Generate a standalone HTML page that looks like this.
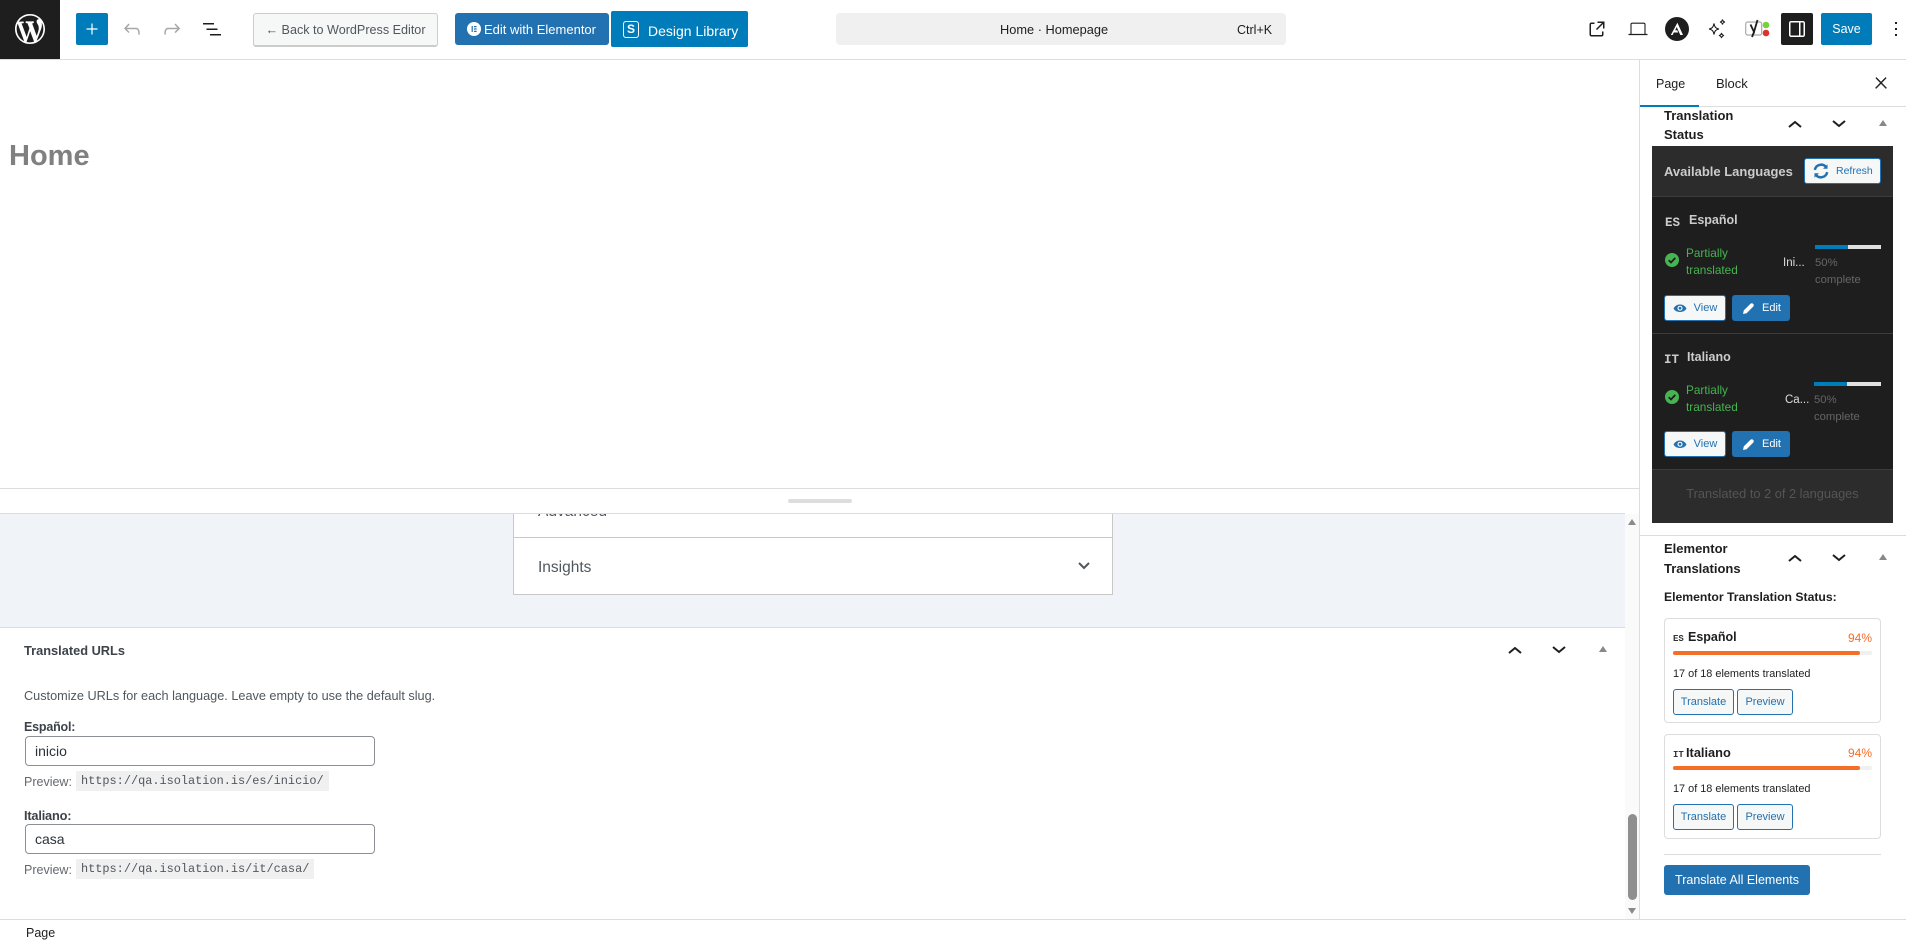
<!DOCTYPE html>
<html><head><meta charset="utf-8"><style>
*{box-sizing:border-box}
html,body{margin:0;padding:0;width:1906px;height:941px;overflow:hidden;background:#fff;font-family:"Liberation Sans",sans-serif;color:#1e1e1e}
.a{position:absolute}
.t{position:absolute;white-space:nowrap;height:20px;line-height:20px;margin-top:1px}
.b{position:absolute;border-radius:3px;font-size:11px;text-align:center;white-space:nowrap;padding-top:1px}
.wb{background:#f6f7f7;border:1px solid #2271b1;color:#2271b1}
.bb{background:#2271b1;color:#fff}
svg{position:absolute;display:block}
</style></head><body>
<!-- header -->
<div class="a" style="left:0;top:59px;width:1906px;height:1px;background:#ddd"></div>
<div class="a" style="left:0;top:0;width:60px;height:59px;background:#1e1e1e"></div>
<svg style="left:15px;top:14px" width="30" height="30" viewBox="0 0 20 20" fill="#fff"><path d="M20 10c0-5.51-4.49-10-10-10C4.48 0 0 4.49 0 10c0 5.52 4.48 10 10 10 5.51 0 10-4.48 10-10zM7.78 15.37L4.37 6.22c.55-.02 1.17-.08 1.17-.08.5-.06.44-1.13-.06-1.11 0 0-1.45.11-2.37.11-.18 0-.37 0-.58-.01C4.12 2.69 6.87 1.11 10 1.11c2.33 0 4.45.87 6.05 2.34-.68-.11-1.65.39-1.65 1.58 0 .74.45 1.36.9 2.1.35.61.55 1.36.55 2.46 0 1.49-1.4 5-1.4 5l-3.03-8.37c.54-.02.82-.17.82-.17.5-.05.44-1.25-.06-1.22 0 0-1.44.12-2.38.12-.87 0-2.33-.12-2.33-.12-.5-.03-.56 1.2-.06 1.22l.92.08 1.26 3.41zM17.41 10c.24-.64.74-1.87.43-4.25.7 1.29 1.05 2.71 1.05 4.25 0 3.29-1.73 6.24-4.4 7.78.97-2.59 1.94-5.2 2.92-7.78zM6.1 18.09C3.12 16.65 1.11 13.53 1.11 10c0-1.3.23-2.48.72-3.59C3.25 10.3 4.67 14.2 6.1 18.09zm4.03-6.63l2.58 6.98c-.86.29-1.76.45-2.71.45-.79 0-1.57-.11-2.29-.33.81-2.38 1.62-4.74 2.42-7.1z"/></svg>
<div class="a" style="left:76px;top:13px;width:32px;height:32px;background:#007cba;border-radius:2px"></div>
<svg style="left:80px;top:17px" width="24" height="24" viewBox="0 0 24 24" fill="#fff"><path d="M11.4 6.500h1.200v4.900h4.900v1.200h-4.900v4.900h-1.200v-4.900H6.500v-1.200h4.900z"/></svg>
<svg style="left:120px;top:17px" width="24" height="24" viewBox="0 0 24 24" fill="#a7a7a7"><path d="M18.3 11.700c-.6-.6-1.400-.9-2.300-.9H6.700l2.900-3.300-1.100-1-4.500 5L8.500 16l1-1-2.700-2.700H16c.5 0 .9.200 1.300.5 1 1 1 3.400 1 4.500v.3h1.500v-.2c0-1.500 0-4.300-1.500-5.700z"/></svg>
<svg style="left:160px;top:17px" width="24" height="24" viewBox="0 0 24 24" fill="#a7a7a7"><path d="M15.600 6.500l-1.100 1 2.900 3.300H8c-.9 0-1.700.3-2.300.9-1.400 1.500-1.400 4.200-1.400 5.600v.2h1.500v-.3c0-1.100 0-3.500 1-4.500.3-.3.7-.5 1.300-.5h9.200L14.500 15l1.100 1.100 4.600-4.600-4.600-5z"/></svg>
<svg style="left:200px;top:17px" width="24" height="24" viewBox="0 0 24 24" fill="#1e1e1e"><path d="M3 6h11v1.500H3V6Zm3.500 5.500h11V13h-11v-1.500ZM21 17H10v1.500h11V17Z"/></svg>

<div class="a" style="left:253px;top:13px;width:185px;height:34px;background:#f6f7f7;border:1px solid #ccc;border-bottom-width:2px;border-radius:3px;color:#50575e;font-size:12.6px;line-height:32px;text-align:center;white-space:nowrap">← Back to WordPress Editor</div>
<div class="a" style="left:455px;top:13px;width:154px;height:32px;background:#2271b1;border-radius:3px"></div>
<div class="a" style="left:467px;top:22px;width:14px;height:14px;border-radius:50%;background:#fff"></div>
<svg style="left:467px;top:22px" width="14" height="14" viewBox="0 0 14 14" fill="#2271b1"><path d="M4.600 4h1.200v6H4.600zM7 4h2.600v1.200H7zM7 6.400h2.600v1.200H7zM7 8.800h2.600V10H7z"/></svg>
<div class="t" style="left:484px;top:19px;font-size:13px;color:#fff">Edit with Elementor</div>
<div class="a" style="left:611px;top:11px;width:137px;height:36px;background:#007cba;border-radius:2px"></div>
<div class="a" style="left:623px;top:21px;width:16px;height:17px;border:1.3px solid #fff;border-radius:3px;color:#fff;font-size:12px;font-weight:700;text-align:center;line-height:14px">S</div>
<div class="t" style="left:648px;top:20px;font-size:14px;color:#fff">Design Library</div>

<div class="a" style="left:836px;top:13px;width:450px;height:32px;background:#f0f0f0;border-radius:4px"></div>
<div class="t" style="left:1000px;top:19px;font-size:12.8px;color:#1e1e1e">Home · Homepage</div>
<div class="t" style="left:1237px;top:19px;font-size:12.5px;color:#1e1e1e">Ctrl+K</div>

<svg style="left:1585px;top:17px" width="24" height="24" viewBox="0 0 24 24" fill="#1e1e1e"><path d="M19.500 4.500h-7V6h4.440l-5.970 5.970 1.060 1.060L18 7.060v4.440h1.500v-7Zm-13 1a2 2 0 0 0-2 2v10a2 2 0 0 0 2 2h10a2 2 0 0 0 2-2v-3H17v3a.5.5 0 0 1-.5.5h-10a.5.5 0 0 1-.5-.5v-10a.5.5 0 0 1 .5-.5h3V5.500h-3Z"/></svg>
<svg style="left:1626px;top:17px" width="24" height="24" viewBox="0 0 24 24" fill="none" stroke="#1e1e1e" stroke-width="1.1"><path d="M5 17V7.500C5 6.700 5.700 6.200 6.400 6.200h11.200c.7 0 1.400.5 1.400 1.300V17"/><path d="M2.500 17.500h19" stroke-width="1.300"/></svg>
<svg style="left:1665px;top:17px" width="24" height="24" viewBox="0 0 24 24"><circle cx="12" cy="12" r="12" fill="#1e1e1e"/><path d="M12.400 5.800L18 18h-2.700l-3.600-8-1.500 3.300h2l1 2.200H8.800L7.600 18H5.800z" fill="#fff"/></svg>
<svg style="left:1706px;top:18px" width="22" height="22" viewBox="0 0 22 22" fill="none" stroke="#1e1e1e" stroke-width="1.100"><path d="M8 5.500C8.600 9 9.700 10.400 13 11c-3.300.6-4.400 2-5 5.500C7.400 13 6.300 11.600 3 11c3.300-.6 4.400-2 5-5.500z"/><path d="M16.500 1.500c.3 1.700.9 2.300 2.500 2.500-1.600.3-2.200.9-2.500 2.500-.3-1.600-.9-2.200-2.500-2.500 1.600-.2 2.200-.8 2.500-2.500z"/><path d="M15.500 15c.3 1.700.9 2.300 2.500 2.500-1.600.3-2.200.9-2.500 2.500-.3-1.600-.9-2.200-2.500-2.500 1.600-.2 2.200-.8 2.500-2.500z"/></svg>
<svg style="left:1745px;top:19px" width="26" height="20" viewBox="0 0 26 20"><rect x=".7" y="3" width="16" height="13" rx="2" fill="none" stroke="#aaa" stroke-width="1.200"/><path d="M5.500 5.500l3.500 7.500 3.500-12" fill="none" stroke="#1e1e1e" stroke-width="1.800"/><path d="M9 13l-2 5" stroke="#1e1e1e" stroke-width="1.800"/><circle cx="21" cy="6" r="3.300" fill="#7ad03a"/><circle cx="21" cy="14" r="3.300" fill="#dc3232"/></svg>
<div class="a" style="left:1781px;top:13px;width:32px;height:32px;background:#1e1e1e;border-radius:2px"></div>
<svg style="left:1785px;top:17px" width="24" height="24" viewBox="0 0 24 24" fill="#fff"><path d="M18 4H6c-1.100 0-2 .9-2 2v12c0 1.100.9 2 2 2h12c1.100 0 2-.9 2-2V6c0-1.100-.9-2-2-2zm-4 14.500H6c-.3 0-.5-.2-.5-.5V6c0-.3.2-.5.5-.5h8v13zm4.500-.5c0 .3-.2.5-.5.5h-2.500v-13H18c.3 0 .5.2.5.5v12z"/></svg>
<div class="a" style="left:1821px;top:13px;width:51px;height:32px;background:#007cba;border-radius:2px;color:#fff;font-size:12.500px;line-height:33px;text-align:center">Save</div>
<svg style="left:1884px;top:17px" width="24" height="24" viewBox="0 0 24 24" fill="#1e1e1e"><path d="M13 19h-2v-2h2v2zm0-6h-2v-2h2v2zm0-6h-2V5h2v2z"/></svg>

<!-- canvas -->
<div class="t" style="left:9px;top:138px;height:34px;line-height:34px;font-size:29px;font-weight:700;color:#808080">Home</div>
<div class="a" style="left:0;top:488px;width:1639px;height:1px;background:#ddd"></div>
<div class="a" style="left:788px;top:499px;width:64px;height:4px;background:#ddd;border-radius:2px"></div>
<div class="a" style="left:0;top:513px;width:1625px;height:115px;background:#f0f3f8;border-top:1px solid #ddd;border-bottom:1px solid #ddd"></div>
<div class="a" style="left:513px;top:514px;width:600px;height:81px;background:#fff;border:1px solid #c8c8c8;border-top:0;overflow:hidden">
  <div class="t" style="left:24px;top:-13px;font-size:15.500px;color:#50575e">Advanced</div>
  <div class="a" style="left:0;top:23px;width:100%;height:1px;background:#c8c8c8"></div>
  <div class="t" style="left:24px;top:43px;font-size:15.500px;color:#50575e">Insights</div>
</div>
<svg style="left:1077px;top:561px" width="14" height="10" viewBox="0 0 14 10" fill="none" stroke="#50575e" stroke-width="2"><path d="M2 2l5 5 5-5"/></svg>

<!-- Translated URLs -->
<div class="t" style="left:24px;top:640px;font-size:12.800px;font-weight:700;color:#3c434a">Translated URLs</div>
<svg style="left:1507px;top:645px" width="16" height="10" viewBox="0 0 16 10" fill="none" stroke="#1e1e1e" stroke-width="2"><path d="M2 8l6-5 6 5"/></svg>
<svg style="left:1551px;top:645px" width="16" height="10" viewBox="0 0 16 10" fill="none" stroke="#1e1e1e" stroke-width="2"><path d="M2 2l6 5 6-5"/></svg>
<div class="a" style="left:1599px;top:646px;width:0;height:0;border:4px solid transparent;border-top:0;border-bottom:6px solid #888"></div>
<div class="t" style="left:24px;top:685px;font-size:12.700px;color:#50575e">Customize URLs for each language. Leave empty to use the default slug.</div>
<div class="t" style="left:24px;top:716px;font-size:12.500px;font-weight:700;color:#3c434a;letter-spacing:-.2px">Español:</div>
<div class="a" style="left:25px;top:736px;width:350px;height:30px;background:#fff;border:1px solid #8c8f94;border-radius:4px;font-size:14px;line-height:29px;padding-left:9px;color:#2c3338">inicio</div>
<div class="t" style="left:24px;top:771px;font-size:12.500px;color:#646970">Preview:</div>
<div class="a" style="left:76px;top:771px;width:253px;height:20px;background:#f0f0f0;font:11.900px/21px 'Liberation Mono',monospace;padding-left:5px;color:#50575e;white-space:nowrap">https://qa.isolation.is/es/inicio/</div>
<div class="t" style="left:24px;top:805px;font-size:12.800px;font-weight:700;color:#3c434a;letter-spacing:-.2px">Italiano:</div>
<div class="a" style="left:25px;top:824px;width:350px;height:30px;background:#fff;border:1px solid #8c8f94;border-radius:4px;font-size:14px;line-height:29px;padding-left:9px;color:#2c3338">casa</div>
<div class="t" style="left:24px;top:859px;font-size:12.500px;color:#646970">Preview:</div>
<div class="a" style="left:76px;top:859px;width:238px;height:20px;background:#f0f0f0;font:11.900px/21px 'Liberation Mono',monospace;padding-left:5px;color:#50575e;white-space:nowrap">https://qa.isolation.is/it/casa/</div>

<!-- scrollbar -->
<div class="a" style="left:1625px;top:514px;width:14px;height:405px;background:#fafafa"></div>
<div class="a" style="left:1628px;top:519px;width:0;height:0;border:4.500px solid transparent;border-top:0;border-bottom:6px solid #8a8a8a"></div>
<div class="a" style="left:1628px;top:814px;width:9px;height:86px;background:#8f8f8f;border-radius:5px"></div>
<div class="a" style="left:1628px;top:908px;width:0;height:0;border:4.500px solid transparent;border-bottom:0;border-top:6px solid #8a8a8a"></div>

<!-- status bar -->
<div class="a" style="left:0;top:919px;width:1906px;height:1px;background:#ddd"></div>
<div class="t" style="left:26px;top:922px;font-size:12.500px;color:#1e1e1e">Page</div>

<!-- sidebar -->
<div class="a" style="left:1639px;top:60px;width:1px;height:859px;background:#ddd"></div>
<div class="t" style="left:1656px;top:73px;font-size:12.500px;color:#1e1e1e">Page</div>
<div class="t" style="left:1716px;top:73px;font-size:13px;color:#1e1e1e">Block</div>
<svg style="left:1872px;top:74px" width="18" height="18" viewBox="0 0 24 24" fill="#1e1e1e"><path d="M13 11.800l6.100-6.300-1-1-6.100 6.200-6.100-6.200-1 1 6.100 6.300-6.500 6.700 1 1 6.500-6.600 6.500 6.600 1-1z" stroke="#1e1e1e" stroke-width=".6"/></svg>
<div class="a" style="left:1640px;top:106px;width:266px;height:1px;background:#ddd"></div>
<div class="a" style="left:1640px;top:105px;width:59px;height:2px;background:#007cba"></div>

<div class="t" style="left:1664px;top:105px;font-size:13px;font-weight:700;color:#1e1e1e">Translation</div>
<div class="t" style="left:1664px;top:124px;font-size:13px;font-weight:700;color:#1e1e1e">Status</div>
<svg style="left:1787px;top:119px" width="16" height="10" viewBox="0 0 16 10" fill="none" stroke="#1e1e1e" stroke-width="2"><path d="M2 8l6-5 6 5"/></svg>
<svg style="left:1831px;top:119px" width="16" height="10" viewBox="0 0 16 10" fill="none" stroke="#1e1e1e" stroke-width="2"><path d="M2 2l6 5 6-5"/></svg>
<div class="a" style="left:1879px;top:120px;width:0;height:0;border:4px solid transparent;border-top:0;border-bottom:6px solid #888"></div>

<!-- dark panel -->
<div class="a" style="left:1652px;top:146px;width:241px;height:377px;background:#1e1e1e"></div>
<div class="a" style="left:1652px;top:146px;width:241px;height:51px;background:#2c2c2c;border-bottom:1px solid #3c3c3c"></div>
<div class="t" style="left:1664px;top:161px;font-size:13px;font-weight:700;color:#ccc">Available Languages</div>
<div class="b wb" style="left:1804px;top:158px;width:77px;height:26px;line-height:23px;padding-left:31px;text-align:left;font-size:10.500px">Refresh</div>
<svg style="left:1812px;top:162px" width="18" height="18" viewBox="0 0 16 16" fill="none" stroke="#2271b1" stroke-width="2.200"><path d="M2.500 7a5.700 5.700 0 0 1 10-2.500M13.500 9a5.700 5.700 0 0 1-10 2.500"/><path d="M13.800 2v4h-4zM2.200 14v-4h4z" fill="#2271b1" stroke="none"/></svg>

<div class="a" style="left:1652px;top:333px;width:241px;height:1px;background:#3c3c3c"></div>
<div class="t" style="left:1665px;top:212px;font:700 12.500px/20px 'Liberation Mono',monospace;color:#ccc">ES</div>
<div class="t" style="left:1689px;top:209px;font-size:12.500px;font-weight:700;color:#ccc">Español</div>
<svg style="left:1665px;top:253px" width="14" height="14" viewBox="0 0 14 14"><circle cx="7" cy="7" r="7" fill="#46b450"/><path d="M3.700 7.200l2.300 2.300 4.300-4.600" fill="none" stroke="#1e1e1e" stroke-width="1.800"/></svg>
<div class="t" style="left:1686px;top:242px;font-size:11.800px;color:#46b450">Partially</div>
<div class="t" style="left:1686px;top:259px;font-size:11.800px;color:#46b450">translated</div>
<div class="t" style="left:1783px;top:252px;font-size:11.500px;color:#ddd">Ini...</div>
<div class="a" style="left:1815px;top:245px;width:66px;height:4px;background:#e0e0e0"></div>
<div class="a" style="left:1815px;top:245px;width:33px;height:4px;background:#007cba"></div>
<div class="t" style="left:1815px;top:252px;font-size:11.300px;color:#666">50%</div>
<div class="t" style="left:1815px;top:269px;font-size:11.300px;color:#666">complete</div>
<div class="b wb" style="left:1664px;top:295px;width:62px;height:26px;line-height:23px;padding-left:21px">View</div>
<svg style="left:1673px;top:302px" width="14" height="12" viewBox="0 0 14 12"><path d="M.5 6.500C2 3.800 4.300 2.500 7 2.500s5 1.300 6.500 4C12 9 9.700 10 7 10S2 9 .5 6.500z" fill="#2271b1"/><circle cx="7" cy="6.200" r="2.500" fill="#fff"/><circle cx="7" cy="6.200" r="1.400" fill="#2271b1"/></svg>
<div class="b bb" style="left:1732px;top:295px;width:58px;height:26px;line-height:25px;padding-left:21px">Edit</div>
<svg style="left:1743px;top:302px" width="12" height="12" viewBox="0 0 12 12" fill="#fff"><path d="M0 12l.8-3.600L7.500 1.700a2 2 0 0 1 2.800 2.800L3.600 11.200z"/></svg>

<div class="t" style="left:1664px;top:349px;font:700 12.500px/20px 'Liberation Mono',monospace;color:#ccc">IT</div>
<div class="t" style="left:1687px;top:346px;font-size:12.500px;font-weight:700;color:#ccc">Italiano</div>
<svg style="left:1665px;top:390px" width="14" height="14" viewBox="0 0 14 14"><circle cx="7" cy="7" r="7" fill="#46b450"/><path d="M3.700 7.200l2.300 2.300 4.300-4.600" fill="none" stroke="#1e1e1e" stroke-width="1.800"/></svg>
<div class="t" style="left:1686px;top:379px;font-size:11.800px;color:#46b450">Partially</div>
<div class="t" style="left:1686px;top:396px;font-size:11.800px;color:#46b450">translated</div>
<div class="t" style="left:1785px;top:389px;font-size:11.500px;color:#ddd">Ca...</div>
<div class="a" style="left:1814px;top:382px;width:67px;height:4px;background:#e0e0e0"></div>
<div class="a" style="left:1814px;top:382px;width:33px;height:4px;background:#007cba"></div>
<div class="t" style="left:1814px;top:389px;font-size:11.300px;color:#666">50%</div>
<div class="t" style="left:1814px;top:406px;font-size:11.300px;color:#666">complete</div>
<div class="b wb" style="left:1664px;top:431px;width:62px;height:26px;line-height:23px;padding-left:21px">View</div>
<svg style="left:1673px;top:438px" width="14" height="12" viewBox="0 0 14 12"><path d="M.5 6.500C2 3.800 4.300 2.500 7 2.500s5 1.300 6.500 4C12 9 9.700 10 7 10S2 9 .5 6.500z" fill="#2271b1"/><circle cx="7" cy="6.200" r="2.500" fill="#fff"/><circle cx="7" cy="6.200" r="1.400" fill="#2271b1"/></svg>
<div class="b bb" style="left:1732px;top:431px;width:58px;height:26px;line-height:25px;padding-left:21px">Edit</div>
<svg style="left:1743px;top:438px" width="12" height="12" viewBox="0 0 12 12" fill="#fff"><path d="M0 12l.8-3.600L7.500 1.700a2 2 0 0 1 2.800 2.800L3.600 11.200z"/></svg>

<div class="a" style="left:1652px;top:469px;width:241px;height:54px;background:#2c2c2c;border-top:1px solid #3c3c3c;color:#555;font-size:12.800px;line-height:48px;text-align:center">Translated to 2 of 2 languages</div>

<!-- Elementor translations -->
<div class="a" style="left:1640px;top:535px;width:266px;height:1px;background:#ddd"></div>
<div class="t" style="left:1664px;top:538px;font-size:13px;font-weight:700;color:#1e1e1e">Elementor</div>
<div class="t" style="left:1664px;top:558px;font-size:13px;font-weight:700;color:#1e1e1e">Translations</div>
<svg style="left:1787px;top:553px" width="16" height="10" viewBox="0 0 16 10" fill="none" stroke="#1e1e1e" stroke-width="2"><path d="M2 8l6-5 6 5"/></svg>
<svg style="left:1831px;top:553px" width="16" height="10" viewBox="0 0 16 10" fill="none" stroke="#1e1e1e" stroke-width="2"><path d="M2 2l6 5 6-5"/></svg>
<div class="a" style="left:1879px;top:554px;width:0;height:0;border:4px solid transparent;border-top:0;border-bottom:6px solid #888"></div>
<div class="t" style="left:1664px;top:586px;font-size:12.200px;font-weight:700;color:#1e1e1e">Elementor Translation Status:</div>

<!-- card 1 -->
<div class="a" style="left:1664px;top:618px;width:217px;height:105px;border:1px solid #ddd;border-radius:4px"></div>
<div class="t" style="left:1673px;top:628px;font:700 9px/20px 'Liberation Mono',monospace;color:#333">ES</div>
<div class="t" style="left:1688px;top:626px;font-size:12.500px;font-weight:700;color:#1e1e1e">Español</div>
<div class="t" style="left:1847px;top:627px;font-size:12px;color:#f56e28;width:25px;text-align:right">94%</div>
<div class="a" style="left:1673px;top:651px;width:199px;height:4px;background:#f0f0f0;border-radius:2px"></div>
<div class="a" style="left:1673px;top:651px;width:187px;height:4px;background:#f56e28;border-radius:2px"></div>
<div class="t" style="left:1673px;top:663px;font-size:10.900px;color:#1e1e1e">17 of 18 elements translated</div>
<div class="b wb" style="left:1673px;top:689px;width:61px;height:26px;line-height:23px;font-size:11px">Translate</div>
<div class="b wb" style="left:1737px;top:689px;width:56px;height:26px;line-height:23px;font-size:11px">Preview</div>
<!-- card 2 -->
<div class="a" style="left:1664px;top:734px;width:217px;height:105px;border:1px solid #ddd;border-radius:4px"></div>
<div class="t" style="left:1673px;top:744px;font:700 9px/20px 'Liberation Mono',monospace;color:#333">IT</div>
<div class="t" style="left:1686px;top:742px;font-size:12.800px;font-weight:700;color:#1e1e1e">Italiano</div>
<div class="t" style="left:1847px;top:742px;font-size:12px;color:#f56e28;width:25px;text-align:right">94%</div>
<div class="a" style="left:1673px;top:766px;width:199px;height:4px;background:#f0f0f0;border-radius:2px"></div>
<div class="a" style="left:1673px;top:766px;width:187px;height:4px;background:#f56e28;border-radius:2px"></div>
<div class="t" style="left:1673px;top:778px;font-size:10.900px;color:#1e1e1e">17 of 18 elements translated</div>
<div class="b wb" style="left:1673px;top:804px;width:61px;height:26px;line-height:23px;font-size:11px">Translate</div>
<div class="b wb" style="left:1737px;top:804px;width:56px;height:26px;line-height:23px;font-size:11px">Preview</div>

<div class="a" style="left:1664px;top:854px;width:217px;height:1px;background:#ddd"></div>
<div class="b bb" style="left:1664px;top:865px;width:146px;height:30px;line-height:28px;font-size:12.500px">Translate All Elements</div>
</body></html>
